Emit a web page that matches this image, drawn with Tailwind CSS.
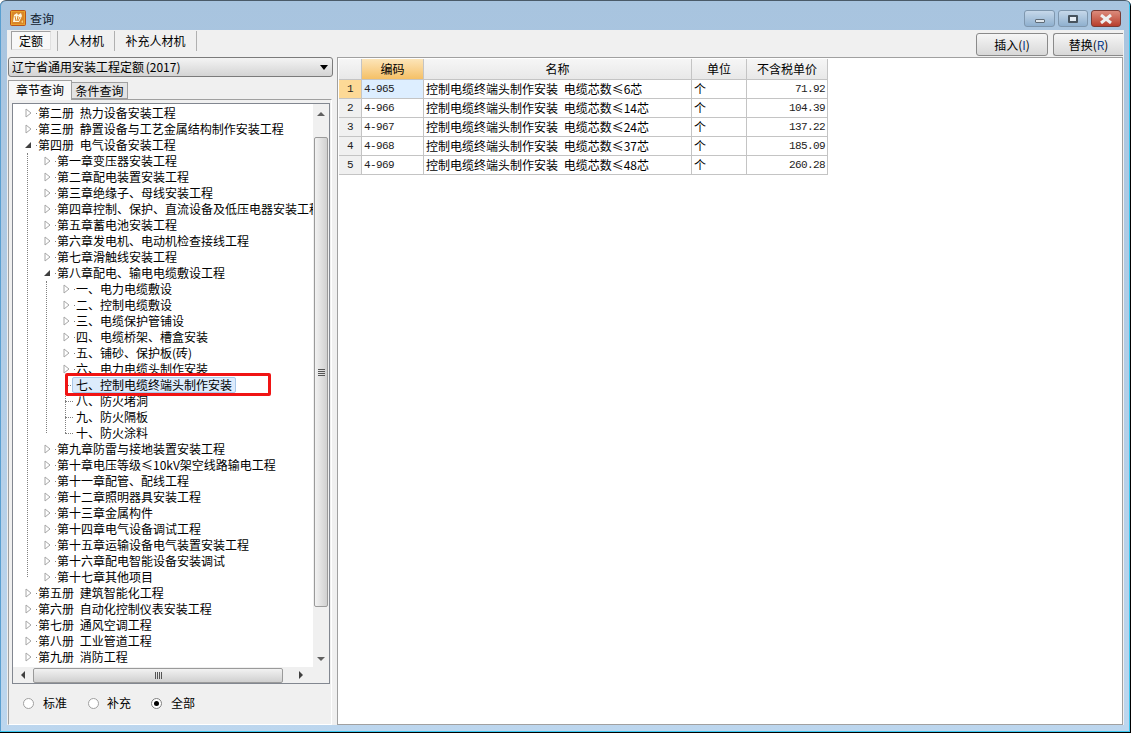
<!DOCTYPE html>
<html lang="zh-CN">
  <head>
    <meta charset="UTF-8" />
    <title>查询</title>
    <script src="https://cdn.jsdelivr.net/npm/@tailwindcss/browser@4"></script>
  </head>
  <body class="bg-white overflow-hidden text-[12px] leading-4 text-black font-['Noto_Sans_CJK_SC','Noto_Sans',sans-serif]">
    <div class="h-[733px] w-[1131px] flex flex-col bg-gradient-to-b from-[#a8c4df] to-[#bcd6ee] rounded-t-[6px] border-t border-t-[#4a5a68] shadow-[inset_-1px_-1px_0_#000,inset_-2px_-2px_0_#3cc8f0,inset_1px_0_0_#5a9fd0]">
      <!-- 标题栏 -->
      <header class="h-[29px] shrink-0 flex items-start pl-[10px] pr-[10px] pt-[9px]">
        <svg width="16" height="16" viewBox="0 0 16 16" class="shrink-0">
          <rect x="0.5" y="0.5" width="15" height="15" rx="1" fill="#e9a22c" stroke="#b9521a" />
          <rect x="2" y="2" width="12" height="12" fill="#d9862a" />
          <path d="M3 12l1-7 3-2 1 2 3-2 1 3-3 6z" fill="#fdf6e0" />
          <path d="M5 6l1 5M8 6l-1 5M10 7l-2 4" stroke="#d9862a" fill="none" />
          <path d="M11 12l2-2v3z" fill="#f7d27a" />
        </svg>
        <span class="ml-[4px] mt-[1px] text-[#10202e]">查询</span>
        <div class="ml-auto flex gap-[3px]">
          <button class="w-[31px] h-[17px] rounded-[3px] border border-[#7f97ae] bg-gradient-to-b from-[#c6d8ea] to-[#8fb0cf] flex items-center justify-center">
            <span class="w-[10px] h-[4px] mt-[5px] bg-[#dfe6ec] border border-[#5f6c78] rounded-[1px]"></span>
          </button>
          <button class="w-[30px] h-[17px] rounded-[3px] border border-[#7f97ae] bg-gradient-to-b from-[#c6d8ea] to-[#8fb0cf] flex items-center justify-center">
            <span class="w-[10px] h-[8px] bg-white/70 border-2 border-[#47535e] rounded-[1px]"></span>
          </button>
          <button class="w-[30px] h-[17px] rounded-[3px] border border-[#7a3a34] bg-gradient-to-b from-[#dc8b7c] to-[#b73d2c] flex items-center justify-center">
            <svg width="14" height="10" viewBox="0 0 14 10"><path d="M2 1l10 8M12 1L2 9" stroke="#eef0f0" stroke-width="3" /></svg>
          </button>
        </div>
      </header>

      <div class="flex-1 min-h-0 mx-[7px] mb-[8px] bg-[#f0f0f0] flex flex-col">
        <!-- 工具栏 -->
        <div class="h-[27px] shrink-0 flex items-start pl-[4px] pr-[1px]">
          <div class="mt-[1px] w-[40px] h-[19px] flex items-center justify-center bg-[#f8f8f8] border border-[#a0a0a0] border-r-[#e0e0e0] border-b-[#e0e0e0]">定额</div>
          <div class="ml-[6px] mt-[1px] w-[58px] h-[20px] border-l border-r border-[#b0b0b0] flex items-center justify-center">人材机</div>
          <div class="mt-[1px] w-[82px] h-[20px] border-r border-[#b0b0b0] flex items-center justify-center">补充人材机</div>
          <button class="ml-auto mt-[3px] w-[72px] h-[23px] rounded-[3px] border border-[#8a8a8a] bg-gradient-to-b from-[#f6f6f6] to-[#d8d8d8]">插入(<span class="text-[#0b3f8c]">I</span>)</button>
          <button class="ml-[5px] mt-[3px] w-[70px] h-[23px] rounded-l-[3px] border border-r-0 border-[#8a8a8a] bg-gradient-to-b from-[#f6f6f6] to-[#d8d8d8]">替换(<span class="text-[#0b3f8c]">R</span>)</button>
        </div>

        <div class="flex-1 min-h-0 flex">
          <!-- 左侧面板 -->
          <aside class="w-[326px] shrink-0 pl-[1px] flex flex-col">
            <div class="h-[20px] w-[325px] shrink-0 rounded-[3px] border border-[#7b7b7b] bg-gradient-to-b from-[#f4f4f4] to-[#d4d4d4] flex items-center pl-[3px] pr-[4px]">
              <span class="[word-spacing:-1px]">辽宁省通用安装工程定额 (2017)</span>
              <span class="ml-auto w-0 h-0 border-x-[4px] border-x-transparent border-t-[5px] border-t-black"></span>
            </div>
            <div class="h-[22px] shrink-0 flex items-end">
              <div class="relative z-10 w-[64px] h-[20px] -mb-px pb-[2px] bg-[#f8f8f8] border border-b-0 border-[#a0a0a0] flex items-center justify-center">章节查询</div>
              <div class="w-[56px] h-[17px] bg-[#e4e4e4] border border-l-0 border-[#a0a0a0] flex items-center justify-center">条件查询</div>
            </div>
            <div class="flex-1 min-h-0 w-[324px] border border-[#a0a0a0] border-b-white border-r-white px-[3px] pt-[3px] flex flex-col">
              <!-- 树 -->
              <div class="h-[581px] w-[318px] shrink-0 border border-[#828790] bg-white flex flex-col">
                <div class="flex-1 min-h-0 flex">
                  <div class="relative flex-1 min-w-0 overflow-hidden pt-[1px]">
                    <div id="tree"></div>
                    <!-- 连接线 -->
                    <i class="absolute left-[14px] top-[49px] h-[424px] border-l border-dotted border-[#808080]"></i>
                    <i class="absolute left-[33px] top-[177px] h-[152px] border-l border-dotted border-[#808080]"></i>
                    <i class="absolute left-[52px] top-[281px] h-[48px] border-l border-dotted border-[#808080]"></i>
                    <!-- 红框标注 -->
                    <div class="absolute left-[52px] top-[269px] w-[206px] h-[23px] border-[3px] border-[#f01414] rounded-[2px]"></div>
                  </div>
                  <!-- 竖直滚动条 -->
                  <div class="w-[16px] shrink-0 bg-[#f0f0f0] flex flex-col items-center">
                    <div class="h-[33px] w-full shrink-0 flex justify-center pt-[8px]">
                      <span class="w-0 h-0 border-x-[4px] border-x-transparent border-b-[4px] border-b-[#606060]"></span>
                    </div>
                    <div class="h-[470px] w-[14px] shrink-0 border border-[#9a9a9a] rounded-[2px] bg-gradient-to-r from-[#f2f2f2] to-[#d0d0d0] flex flex-col items-center justify-center gap-px">
                      <i class="w-[7px] h-px bg-[#555]"></i><i class="w-[7px] h-px bg-[#555]"></i><i class="w-[7px] h-px bg-[#555]"></i><i class="w-[7px] h-px bg-[#555]"></i>
                    </div>
                    <div class="flex-1 w-full flex justify-center items-end pb-[6px]">
                      <span class="w-0 h-0 border-x-[4px] border-x-transparent border-t-[4px] border-t-[#606060]"></span>
                    </div>
                  </div>
                </div>
                <!-- 水平滚动条 -->
                <div class="h-[16px] shrink-0 bg-[#f0f0f0] flex items-center">
                  <div class="w-[20px] flex justify-center shrink-0">
                    <span class="w-0 h-0 border-y-[4px] border-y-transparent border-r-[4px] border-r-[#404040]"></span>
                  </div>
                  <div class="w-[250px] h-[15px] border border-[#9a9a9a] rounded-[2px] bg-gradient-to-b from-[#f2f2f2] to-[#d0d0d0] flex items-center justify-center gap-px">
                    <i class="w-px h-[7px] bg-[#555]"></i><i class="w-px h-[7px] bg-[#555]"></i><i class="w-px h-[7px] bg-[#555]"></i><i class="w-px h-[7px] bg-[#555]"></i>
                  </div>
                  <div class="w-[28px] flex justify-end pr-[8px]">
                    <span class="w-0 h-0 border-y-[4px] border-y-transparent border-l-[4px] border-l-[#404040]"></span>
                  </div>
                </div>
              </div>
              <!-- 单选 -->
              <div class="flex-1 flex items-start pt-[11px] pl-[11px]">
                <label class="flex items-center w-[65px] gap-[9px]"><span class="w-[11px] h-[11px] rounded-full border border-[#a0a0a0] bg-white"></span>标准</label>
                <label class="flex items-center w-[63px] gap-[8px]"><span class="w-[11px] h-[11px] rounded-full border border-[#a0a0a0] bg-white"></span>补充</label>
                <label class="flex items-center gap-[9px]"><span class="w-[11px] h-[11px] rounded-full border border-[#808080] bg-white flex items-center justify-center"><i class="w-[5px] h-[5px] rounded-full bg-black"></i></span>全部</label>
              </div>
            </div>
          </aside>

          <!-- 右侧表格 -->
          <main class="flex-1 min-w-0 ml-[4px] mr-px bg-white border border-[#a0a0a0] p-px">
            <table class="table-fixed border-separate border-spacing-0 w-[489px]">
              <colgroup>
                <col class="w-[23px]" /><col class="w-[62px]" /><col class="w-[268px]" /><col class="w-[55px]" /><col class="w-[81px]" />
              </colgroup>
              <thead>
                <tr class="h-[21px]">
                  <th class="font-normal p-0 border-r border-b border-[#c4c4c4] bg-gradient-to-b from-[#f6f6f6] to-[#e8e8e8]"></th>
                  <th class="font-normal p-0 border-r border-b border-[#c4c4c4] bg-gradient-to-b from-[#fce5b8] to-[#f5c065]">编码</th>
                  <th class="font-normal p-0 border-r border-b border-[#c4c4c4] bg-gradient-to-b from-[#f6f6f6] to-[#e8e8e8]">名称</th>
                  <th class="font-normal p-0 border-r border-b border-[#c4c4c4] bg-gradient-to-b from-[#f6f6f6] to-[#e8e8e8]">单位</th>
                  <th class="font-normal p-0 border-r border-b border-[#c4c4c4] bg-gradient-to-b from-[#f6f6f6] to-[#e8e8e8]">不含税单价</th>
                </tr>
              </thead>
              <tbody id="rows"></tbody>
            </table>
          </main>
        </div>
      </div>
    </div>

    <script>
      // 树节点: [层级, 文字, 类型] c=折叠 e=展开 l=叶子 s=选中
      const treeData = [
        [0, "第二册 热力设备安装工程", "c"],
        [0, "第三册 静置设备与工艺金属结构制作安装工程", "c"],
        [0, "第四册 电气设备安装工程", "e"],
        [1, "第一章变压器安装工程", "c"],
        [1, "第二章配电装置安装工程", "c"],
        [1, "第三章绝缘子、母线安装工程", "c"],
        [1, "第四章控制、保护、直流设备及低压电器安装工程", "c"],
        [1, "第五章蓄电池安装工程", "c"],
        [1, "第六章发电机、电动机检查接线工程", "c"],
        [1, "第七章滑触线安装工程", "c"],
        [1, "第八章配电、输电电缆敷设工程", "e"],
        [2, "一、电力电缆敷设", "c"],
        [2, "二、控制电缆敷设", "c"],
        [2, "三、电缆保护管铺设", "c"],
        [2, "四、电缆桥架、槽盒安装", "c"],
        [2, "五、铺砂、保护板(砖)", "c"],
        [2, "六、电力电缆头制作安装", "c"],
        [2, "七、控制电缆终端头制作安装", "s"],
        [2, "八、防火堵洞", "l"],
        [2, "九、防火隔板", "l"],
        [2, "十、防火涂料", "l"],
        [1, "第九章防雷与接地装置安装工程", "c"],
        [1, "第十章电压等级≤10kV架空线路输电工程", "c"],
        [1, "第十一章配管、配线工程", "c"],
        [1, "第十二章照明器具安装工程", "c"],
        [1, "第十三章金属构件", "c"],
        [1, "第十四章电气设备调试工程", "c"],
        [1, "第十五章运输设备电气装置安装工程", "c"],
        [1, "第十六章配电智能设备安装调试", "c"],
        [1, "第十七章其他项目", "c"],
        [0, "第五册 建筑智能化工程", "c"],
        [0, "第六册 自动化控制仪表安装工程", "c"],
        [0, "第七册 通风空调工程", "c"],
        [0, "第八册 工业管道工程", "c"],
        [0, "第九册 消防工程", "c"],
      ];
      const indent = ["pl-[12px]", "pl-[31px]", "pl-[50px]"];
      const collapsed = `<svg width="7" height="10" viewBox="0 0 7 10" class="shrink-0"><path d="M1 1l5 4-5 4z" fill="#fff" stroke="#a6a6a6"/></svg><i class="ml-[4px] w-px h-px bg-[#808080] shrink-0"></i>`;
      const expanded = `<svg width="7" height="10" viewBox="0 0 7 10" class="shrink-0"><path d="M6 2v6H0z" fill="#404040"/></svg><i class="ml-[4px] w-px h-px bg-[#808080] shrink-0"></i>`;
      const leaf = `<i class="ml-[2px] w-[8px] border-t border-dotted border-[#808080] shrink-0"></i>`;

      document.getElementById("tree").innerHTML = treeData
        .map(([level, text, kind]) => {
          const icon = kind === "c" ? collapsed : kind === "e" ? expanded : leaf;
          const gap = kind === "l" ? "ml-[3px]" : "ml-[1px]";
          const label =
            kind === "s"
              ? `<span class="h-[16px] px-[3px] -ml-px bg-[#dcebfc] border border-[#a8c8ea] rounded-[2px] flex items-center">${text}</span>`
              : `<span class="${gap} [word-spacing:3px]">${text}</span>`;
          return `<div class="h-[16px] flex items-center whitespace-nowrap ${indent[level]}">${icon}${label}</div>`;
        })
        .join("");

      const rowData = [
        ["4-965", "≤6芯", "71.92"],
        ["4-966", "≤14芯", "104.39"],
        ["4-967", "≤24芯", "137.22"],
        ["4-968", "≤37芯", "185.09"],
        ["4-969", "≤48芯", "260.28"],
      ];
      const num = "font-['Liberation_Mono',monospace] text-[11px] tracking-[-0.6px] text-[#222]";
      document.getElementById("rows").innerHTML = rowData
        .map(
          ([code, size, price], i) => `
          <tr class="h-[19px]">
            <td class="p-0 text-center border-r border-b border-[#c4c4c4] ${i === 0 ? "bg-[#fdd996]" : "bg-[#f0f0f0]"} ${num}">${i + 1}</td>
            <td class="p-0 pl-[2px] border-r border-b border-[#c4c4c4] ${i === 0 ? "bg-[#ddeeff]" : ""} ${num}">${code}</td>
            <td class="p-0 pl-[2px] border-r border-b border-[#c4c4c4] whitespace-nowrap [word-spacing:3px]">控制电缆终端头制作安装 电缆芯数${size}</td>
            <td class="p-0 pl-[2px] border-r border-b border-[#c4c4c4]">个</td>
            <td class="p-0 pr-[2px] text-right border-r border-b border-[#c4c4c4] ${num}">${price}</td>
          </tr>`
        )
        .join("");
    </script>
  </body>
</html>
